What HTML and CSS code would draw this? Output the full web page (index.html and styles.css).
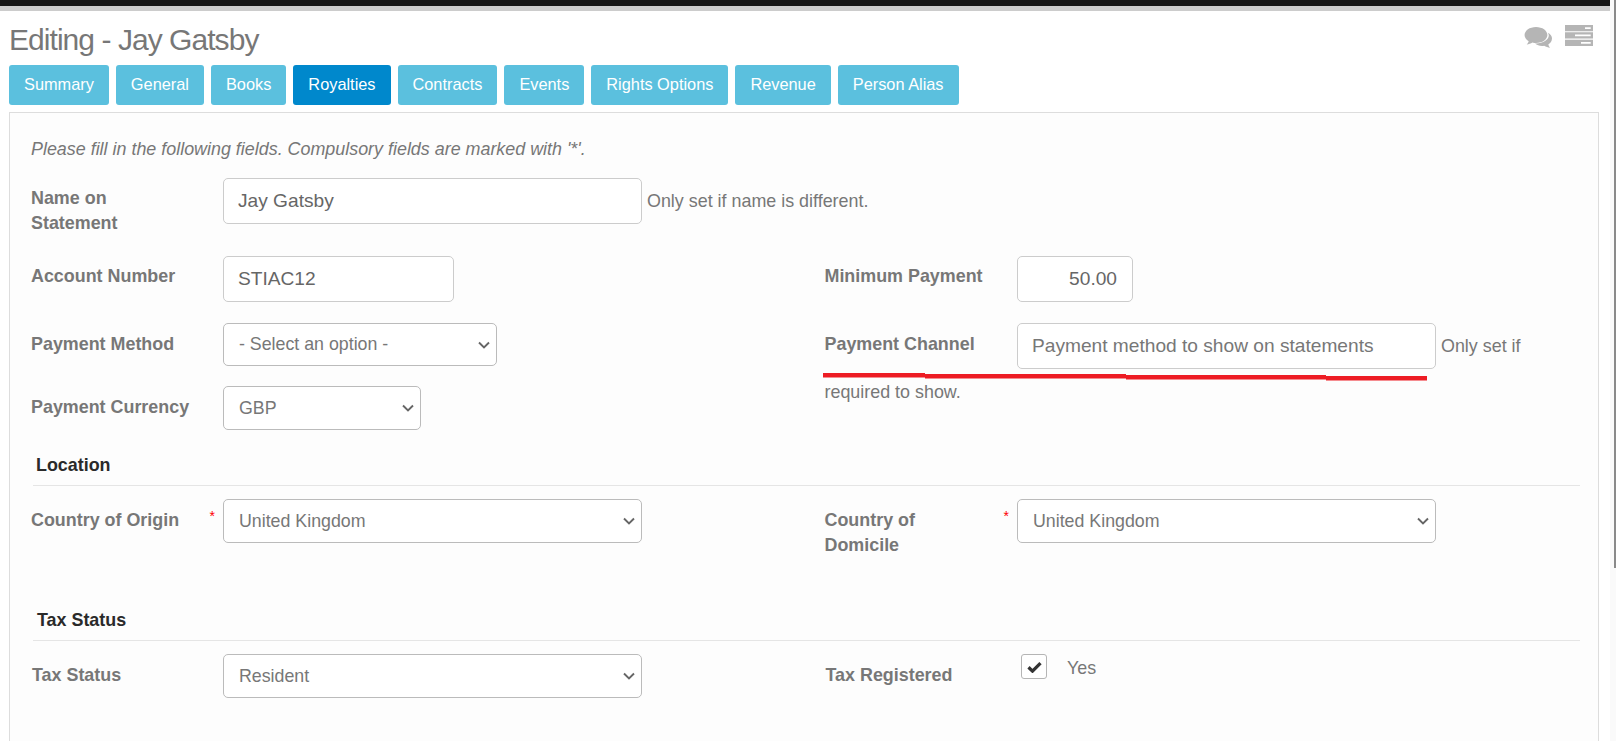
FILE: index.html
```html
<!DOCTYPE html>
<html lang="en">
<head>
<meta charset="utf-8">
<title>Editing - Jay Gatsby</title>
<link rel="stylesheet" href="styles.css">
</head>
<body>
<div class="shell">
  <main class="main">
    <div class="topbar"></div>
    <header class="head">
      <h1 class="title">Editing - Jay Gatsby</h1>
      <div class="tools">
        <svg class="ico-chat" viewBox="0 0 28 22" aria-hidden="true">
          <path d="M12 0C5.600 0 .6 3.600 .6 8C.6 10.600 2.200 12.800 4.700 14.300C4.400 15.500 3.700 16.500 2.700 17.500C4.800 17.200 6.800 16.400 8.500 15.400C9.300 15.800 10.900 16 12 16C18.400 16 23.400 12.400 23.400 8S18.400 0 12 0Z"/>
          <path d="M23.700 5.700C26.500 7 28 9 28 11.300C28 14 26.500 16.200 24.300 17.600C24.600 18.800 25.200 19.800 26 20.700C24 20.500 22 19.800 20.200 18.700C19.400 18.800 18.700 18.900 18 18.900C15.300 18.900 12.800 18 11 16.500C18.500 16.900 24.800 13 24.800 8.300C24.800 7.400 24.400 6.500 23.700 5.700Z"/>
        </svg>
        <svg class="ico-list" viewBox="0 0 28 22" preserveAspectRatio="none" aria-hidden="true">
          <path fill-rule="evenodd" d="M0 0h28v6.500H0zM20 2.300v1.800h5.700V2.300zM0 7.700h28v6.500H0zM10 10v1.800h15.700V10zM0 15.500h28V22H0zM16 17.800v1.800h9.700v-1.800z"/>
        </svg>
      </div>
    </header>
    <nav class="tabs">
      <a class="tab">Summary</a>
      <a class="tab">General</a>
      <a class="tab">Books</a>
      <a class="tab tab-active">Royalties</a>
      <a class="tab">Contracts</a>
      <a class="tab">Events</a>
      <a class="tab">Rights Options</a>
      <a class="tab">Revenue</a>
      <a class="tab">Person Alias</a>
    </nav>
    <section class="panel">
      <p class="hint">Please fill in the following fields. Compulsory fields are marked with '*'.</p>

      <div class="field row-name">
        <label class="lbl">Name on Statement</label>
        <input class="ctl w-wide" type="text" value="Jay Gatsby">
        <span class="note">Only set if name is different.</span>
      </div>

      <div class="cols row-pay">
        <div class="col">
          <div class="field"><label class="lbl lbl-top">Account Number</label><input class="ctl w-acc" type="text" value="STIAC12"></div>
          <div class="field gap-method"><label class="lbl">Payment Method</label><select class="ctl sel sel-short w-method"><option>- Select an option -</option></select></div>
          <div class="field gap-currency"><label class="lbl">Payment Currency</label><select class="ctl sel w-cur"><option>GBP</option></select></div>
        </div>
        <div class="col">
          <div class="field"><label class="lbl lbl-top">Minimum Payment</label><input class="ctl w-min num" type="text" value="50.00"></div>
          <div class="flowfield gap-channel">
            <label class="lbl lbl-inline">Payment Channel</label><input class="ctl w-wide" type="text" placeholder="Payment method to show on statements"><span class="note note-a">Only set if</span> <span class="note">required to show.</span>
            <svg class="scribble" viewBox="0 0 606 8" aria-hidden="true">
              <path d="M1 2.300H103"/><path d="M103 3.300H304"/><path d="M304 4.300H504"/><path d="M504 5.300H605"/>
            </svg>
          </div>
        </div>
      </div>

      <h2 class="sect sect-loc">Location</h2>
      <div class="cols row-country">
        <div class="col"><div class="field"><label class="lbl req">Country of Origin</label><select class="ctl sel w-wide"><option>United Kingdom</option></select></div></div>
        <div class="col"><div class="field"><label class="lbl req">Country of Domicile</label><select class="ctl sel w-wide"><option>United Kingdom</option></select></div></div>
      </div>

      <h2 class="sect sect-tax">Tax Status</h2>
      <div class="cols row-tax">
        <div class="col"><div class="field"><label class="lbl">Tax Status</label><select class="ctl sel w-wide"><option>Resident</option></select></div></div>
        <div class="col"><div class="field"><label class="lbl lbl-reg">Tax Registered</label>
          <span class="check"><svg viewBox="0 0 16 13" aria-hidden="true"><path d="M1.500 6.800L5.800 11L14.500 2.200"/></svg></span><span class="yes">Yes</span></div></div>
      </div>
    </section>
  </main>
  <div class="track"><div class="thumb"></div></div>
</div>
</body>
</html>
```
FILE: styles.css
```css
* { box-sizing: border-box; }
html, body { margin: 0; height: 100%; overflow: hidden; background: #fff; }
body { font-family: "Liberation Sans", Arial, sans-serif; font-size: 17.9px; color: #777; }
.shell { display: flex; height: 741px; }
.main { width: 1610px; display: flex; flex-direction: column; }
.track { width: 6px; padding-left: 4px; background: #fafafa; }
.thumb { width: 2px; height: 568px; background: #8a8a8a; }
.topbar { height: 11px; background: #161616; border-bottom: 5px solid #ccc; flex: none; }
.head { display: flex; justify-content: space-between; height: 54px; padding: 13px 17px 0 9px; flex: none; }
.title { margin: 0; font-size: 30px; font-weight: 400; line-height: 32px; letter-spacing: -.95px; color: #777; }
.tools { display: flex; gap: 13px; align-items: flex-start; fill: #b5b5b5; }
.ico-chat { width: 28px; height: 22px; margin-top: 3px; }
.ico-list { width: 28px; height: 21px; margin-top: 1px; }
.tabs { display: flex; gap: 7px; padding-left: 9px; height: 40px; flex: none; }
.tab { display: flex; align-items: center; padding: 0 15px 2px; background: #5bc0de; color: #fff; border-radius: 3px; font-size: 16.33px; }
.tab-active { background: #0088cc; }
.panel { width: 1590px; margin: 7px 0 0 9px; padding: 0 18px 0 21px; background: #fdfdfd; border: 1px solid #ddd; border-bottom: 0; flex: 1; }
.hint { margin: 24px 0 0; font-style: italic; line-height: 25px; }
.field { display: flex; align-items: flex-start; }
.lbl { display: block; width: 192px; flex: none; padding-right: 30px; font-weight: 700; line-height: 25px; position: relative; }
.col + .col .lbl { width: 192.5px; margin-left: -.5px; }
.ctl { display: block; height: 46px; padding: 0 14px; background: #fff; border: 1px solid #ccc; border-radius: 5px; font: 400 19.15px "Liberation Sans", Arial, sans-serif; color: #666; flex: none; }
.ctl::placeholder { color: #777; opacity: 1; }
.sel { appearance: none; height: 44px; font-size: 17.8px; color: #777; border-color: #bbb; padding: 0 15px; background: #fff url("data:image/svg+xml,%3Csvg xmlns='http://www.w3.org/2000/svg' viewBox='0 0 12 8'%3E%3Cpath d='M1 1.500L6 6.500L11 1.500' fill='none' stroke='%23666' stroke-width='1.900'/%3E%3C/svg%3E") no-repeat right 6px center / 12px 8px; }
.sel-short { height: 43px; padding-bottom: 2px; }
.num { text-align: right; padding-right: 15px; }
.w-wide { width: 419px; }
.w-acc { width: 231px; }
.w-min { width: 116px; }
.w-method { width: 274px; }
.w-cur { width: 198px; }
.note { margin-left: 5px; line-height: 46px; }
.row-name { margin-top: 16px; }
.row-name .lbl { padding-top: 8px; }
.cols { display: grid; grid-template-columns: 794px 1fr; }
.row-pay { margin-top: 20px; }
.row-pay .lbl { padding-top: 9px; }
.row-pay .lbl-top { padding-top: 8px; }
.gap-method { margin-top: 21px; }
.gap-currency { margin-top: 20px; }
.flowfield { position: relative; margin: 21px 0 0 -.5px; }
.flowfield .ctl { display: inline-block; vertical-align: top; margin-bottom: -3px; }
.flowfield .note { line-height: 46px; margin-left: 0; }
.flowfield .note-a { margin-left: 5px; }
.col + .col .lbl-inline { display: inline-block; vertical-align: top; margin-left: 0; }
.scribble { position: absolute; left: -3px; top: 50px; width: 606px; height: 8px; }
.scribble path { fill: none; stroke: #ed1c24; stroke-width: 4.5px; }
.sect { margin: 0 0 0 2px; font-size: 17.9px; font-weight: 700; color: #2a2a2a; line-height: 24px; padding: 1px 0 8px 4px; border-bottom: 1px solid #e5e5e5; }
.sect-loc { margin-top: 22px; padding-left: 3px; }
.sect-tax { margin-top: 49px; }
.row-country { margin-top: 13px; }
.row-country .lbl { padding-top: 9px; }
.req::after { content: "*"; position: absolute; right: 8px; top: 5px; color: #f00; font-weight: 400; font-size: 14px; }
.row-tax { margin-top: 13px; }
.row-tax .lbl { padding: 9px 0 0 1px; }
.check { display: flex; align-items: center; justify-content: center; width: 26px; height: 25px; margin-left: 4px; background: #fff; border: 1px solid #b5b5b5; border-radius: 3px; }
.check svg { width: 15px; height: 12px; }
.check path { fill: none; stroke: #333; stroke-width: 3.5px; }
.yes { margin-left: 20px; line-height: 28px; }
```
